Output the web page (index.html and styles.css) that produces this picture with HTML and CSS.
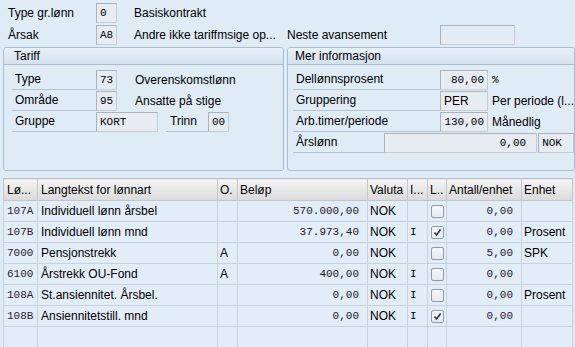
FILE: index.html
```html
<!DOCTYPE html>
<html lang="nb">
<head>
    <meta charset="UTF-8">
    <title>Basislønn</title>
    <link rel="stylesheet" href="styles.css">
</head>
<body>
    <div class="screen">
        <div class="line">
            <span class="lbl">Type gr.lønn</span>
            <span class="fld w21">0</span>
            <span class="txt">Basiskontrakt</span>
        </div>
        <div class="line">
            <span class="lbl">Årsak</span>
            <span class="fld w21">A8</span>
            <span class="txt wide">Andre ikke tariffmsige op...</span>
            <span class="lbl2">Neste avansement</span>
            <span class="fld empty w75"></span>
        </div>

        <div class="frames">
            <!-- venstre ramme -->
            <div class="frame tariff">
                <div class="frame-head">Tariff</div>
                <div class="frame-body">
                    <div class="frow">
                        <span class="flbl">Type</span>
                        <span class="fld w21">73</span>
                        <span class="txt">Overenskomstlønn</span>
                    </div>
                    <div class="frow">
                        <span class="flbl">Område</span>
                        <span class="fld w21">95</span>
                        <span class="txt">Ansatte på stige</span>
                    </div>
                    <div class="frow">
                        <span class="flbl">Gruppe</span>
                        <span class="fld w62">KORT</span>
                        <span class="flbl trinn">Trinn</span>
                        <span class="fld w21">00</span>
                    </div>
                </div>
            </div>
            <!-- høyre ramme -->
            <div class="frame info">
                <div class="frame-head">Mer informasjon</div>
                <div class="frame-body">
                    <div class="frow">
                        <span class="flbl long">Dellønnsprosent</span>
                        <span class="fld w48 num">80,00</span>
                        <span class="unit mono">%</span>
                    </div>
                    <div class="frow">
                        <span class="flbl long">Gruppering</span>
                        <span class="fld w48 sans">PER</span>
                        <span class="unit">Per periode (l...</span>
                    </div>
                    <div class="frow">
                        <span class="flbl long">Arb.timer/periode</span>
                        <span class="fld w48 num">130,00</span>
                        <span class="unit">Månedlig</span>
                    </div>
                    <div class="frow">
                        <span class="flbl short">Årslønn</span>
                        <span class="fld w154 num">0,00</span>
                        <span class="fld w36 cur">NOK</span>
                    </div>
                </div>
            </div>
        </div>

        <table class="grid">
            <colgroup>
                <col style="width:34px">
                <col style="width:180px">
                <col style="width:20px">
                <col style="width:130px">
                <col style="width:40px">
                <col style="width:20px">
                <col style="width:19px">
                <col style="width:75px">
                <col style="width:51px">
            </colgroup>
            <thead>
                <tr>
                    <th>Lø...</th>
                    <th>Langtekst for lønnart</th>
                    <th>O.</th>
                    <th>Beløp</th>
                    <th>Valuta</th>
                    <th>I...</th>
                    <th>L..</th>
                    <th>Antall/enhet</th>
                    <th>Enhet</th>
                </tr>
            </thead>
            <tbody>
                <tr>
                    <td class="mono">107A</td><td>Individuell lønn årsbel</td><td></td>
                    <td class="num">570.000,00</td><td>NOK</td><td class="mono"></td>
                    <td class="chk"><span class="box"></span></td>
                    <td class="num">0,00</td><td></td>
                </tr>
                <tr>
                    <td class="mono">107B</td><td>Individuell lønn mnd</td><td></td>
                    <td class="num">37.973,40</td><td>NOK</td><td class="mono">I</td>
                    <td class="chk"><span class="box"><svg width="11" height="11" viewBox="0 0 11 11"><path d="M2.5 5.5 L4.6 8 L8.6 2.6" fill="none" stroke="#2e3a46" stroke-width="1.6"/></svg></span></td>
                    <td class="num">0,00</td><td>Prosent</td>
                </tr>
                <tr>
                    <td class="mono">7000</td><td>Pensjonstrekk</td><td>A</td>
                    <td class="num">0,00</td><td>NOK</td><td class="mono"></td>
                    <td class="chk"><span class="box"></span></td>
                    <td class="num">5,00</td><td>SPK</td>
                </tr>
                <tr>
                    <td class="mono">6100</td><td>Årstrekk OU-Fond</td><td>A</td>
                    <td class="num">400,00</td><td>NOK</td><td class="mono">I</td>
                    <td class="chk"><span class="box"></span></td>
                    <td class="num">0,00</td><td></td>
                </tr>
                <tr>
                    <td class="mono">108A</td><td>St.ansiennitet. Årsbel.</td><td></td>
                    <td class="num">0,00</td><td>NOK</td><td class="mono">I</td>
                    <td class="chk"><span class="box"></span></td>
                    <td class="num">0,00</td><td>Prosent</td>
                </tr>
                <tr>
                    <td class="mono">108B</td><td>Ansiennitetstill. mnd</td><td></td>
                    <td class="num">0,00</td><td>NOK</td><td class="mono">I</td>
                    <td class="chk"><span class="box"><svg width="11" height="11" viewBox="0 0 11 11"><path d="M2.5 5.5 L4.6 8 L8.6 2.6" fill="none" stroke="#2e3a46" stroke-width="1.6"/></svg></span></td>
                    <td class="num">0,00</td><td></td>
                </tr>
                <tr class="blank">
                    <td></td><td></td><td></td><td></td><td></td><td></td><td></td><td></td><td></td>
                </tr>
            </tbody>
        </table>
    </div>
</body>
</html>
```

FILE: styles.css
```css
* {
    margin: 0;
    padding: 0;
    box-sizing: border-box;
}
body {
    width: 575px;
    height: 347px;
    overflow: hidden;
    background: #dfebf5;
    font-family: "Liberation Sans", Arial, sans-serif;
    font-size: 12px;
    color: #000;
}
.screen {
    padding: 3px 0 0 3px;
}

/* øverste linjer */
.line {
    display: flex;
    align-items: center;
    height: 20px;
    margin-bottom: 2px;
}
.line .lbl {
    width: 93px;
    padding-left: 5px;
}
.line .txt {
    margin-left: 17px;
}
.line .txt.wide {
    width: 153px;
    white-space: nowrap;
}
.lbl2 {
    width: 153px;
}

/* felter */
.fld {
    display: block;
    height: 20px;
    border: 1px solid #a9b3bd;
    border-right-color: #c3cbd3;
    border-bottom-color: #c3cbd3;
    background: #e6ecf2;
    font-family: "Liberation Mono", "Courier New", monospace;
    font-size: 11px;
    line-height: 18px;
    padding: 0 3px;
    white-space: nowrap;
    overflow: hidden;
}
.fld.empty {
    background: #e3ecf5;
}
.fld.num {
    text-align: right;
}
.fld.sans {
    font-family: "Liberation Sans", Arial, sans-serif;
    font-size: 12px;
}
.w21 { width: 21px; }
.w48 { width: 48px; }
.w62 { width: 62px; }
.w75 { width: 75px; }
.w154 { width: 154px; }
.w36 { width: 36px; margin-left: 1px; }
.fld.w154 {
    padding-right: 10px;
}

/* rammer */
.frames {
    display: flex;
    gap: 3px;
    margin-top: 2px;
    height: 124px;
}
.frame {
    border: 1px solid #a6bdd2;
    border-radius: 3px;
    overflow: hidden;
}
.tariff {
    width: 282px;
}
.info {
    width: 289px;
}
.frame-head {
    height: 17px;
    line-height: 16px;
    padding-left: 10px;
    background: linear-gradient(#e8f0f8, #d4e1ee);
    border-bottom: 1px solid #a6bdd2;
}
.info .frame-head {
    padding-left: 7px;
}
.frame-body {
    padding: 5px 0 0 8px;
}
.info .frame-body {
    padding-left: 5px;
}
.frow {
    display: flex;
    align-items: center;
    height: 20px;
    margin-bottom: 1px;
}
.flbl {
    width: 84px;
    height: 20px;
    line-height: 19px;
    padding-left: 3px;
    border-bottom: 1px solid #b3c2d0;
}
.flbl.long {
    width: 147px;
}
.flbl.short {
    width: 91px;
}
.flbl.trinn {
    width: 42px;
    margin-left: 8px;
    padding-left: 4px;
}
.frow .txt {
    margin-left: 18px;
}
.unit {
    margin-left: 4px;
    white-space: nowrap;
}
.mono {
    font-family: "Liberation Mono", "Courier New", monospace;
    font-size: 11px;
}

/* tabell */
.grid {
    margin-top: 7px;
    border-collapse: collapse;
    table-layout: fixed;
    width: 569px;
}
.grid th {
    height: 22px;
    font-weight: normal;
    text-align: left;
    padding: 0 2px;
    background: linear-gradient(#f4f4f4, #dadada);
    border: 1px solid #c0c6cc;
    border-top-color: #b7c2cc;
    white-space: nowrap;
    overflow: hidden;
}
.grid th:first-child {
    padding-left: 3px;
}
.grid th:nth-child(2) {
    padding-left: 3px;
}
.grid td {
    height: 21px;
    padding: 0 2px;
    background: #e3edf7;
    border: 1px solid #c6d3df;
    border-top: none;
    white-space: nowrap;
    overflow: hidden;
}
.grid td:first-child {
    padding-left: 3px;
    color: #2a1c36;
}
.grid td:nth-child(2) {
    padding-left: 3px;
}
.grid td.num {
    text-align: right;
    padding-right: 8px;
    font-family: "Liberation Mono", "Courier New", monospace;
    font-size: 11px;
    color: #1c1830;
}
.grid td.chk {
    padding: 0 0 0 3px;
}
.box {
    display: block;
    width: 13px;
    height: 13px;
    border: 1px solid #8d9cab;
    border-radius: 2px;
    background: linear-gradient(#f4f7fa, #e4eaf0);
}
.box svg {
    display: block;
}
```
